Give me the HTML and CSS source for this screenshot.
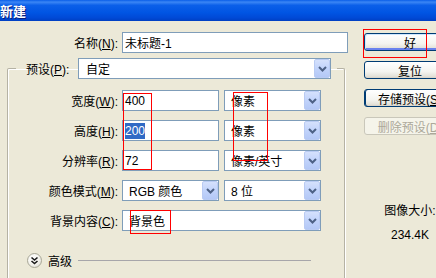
FILE: index.html
```html
<!DOCTYPE html>
<html lang="zh-CN">
<head>
  <meta charset="UTF-8" />
  <meta name="viewport" content="width=device-width, initial-scale=1" />
  <title>新建</title>
  <link rel="stylesheet" href="styles.css">
</head>
<body>
  <div class="window">
    <div class="titlebar">新建</div>
    <div class="content">
      <div class="main">
        <div class="row name-row">
          <span class="label">名称(<u>N</u>):</span>
          <div class="field name-field">未标题-1</div>
        </div>

        <fieldset class="group">
          <legend class="preset">
            <span class="preset-label">预设(<u>P</u>):</span>
            <div class="select preset-select">
              <span class="value">自定</span>
              <span class="arrow"><svg width="9" height="6" viewBox="0 0 9 6"><polyline points="1,1 4.5,4.5 8,1" /></svg></span>
            </div>
          </legend>

          <div class="row">
            <span class="label">宽度(<u>W</u>):</span>
            <div class="field short">400</div>
            <div class="select short">
              <span class="value">像素</span>
              <span class="arrow"><svg width="9" height="6" viewBox="0 0 9 6"><polyline points="1,1 4.5,4.5 8,1" /></svg></span>
            </div>
          </div>
          <div class="row">
            <span class="label">高度(<u>H</u>):</span>
            <div class="field short"><span class="selected">200</span></div>
            <div class="select short">
              <span class="value">像素</span>
              <span class="arrow"><svg width="9" height="6" viewBox="0 0 9 6"><polyline points="1,1 4.5,4.5 8,1" /></svg></span>
            </div>
          </div>
          <div class="row">
            <span class="label">分辨率(<u>R</u>):</span>
            <div class="field short">72</div>
            <div class="select short">
              <span class="value">像素/英寸</span>
              <span class="arrow"><svg width="9" height="6" viewBox="0 0 9 6"><polyline points="1,1 4.5,4.5 8,1" /></svg></span>
            </div>
          </div>
          <div class="row">
            <span class="label">颜色模式(<u>M</u>):</span>
            <div class="select short">
              <span class="value">RGB 颜色</span>
              <span class="arrow"><svg width="9" height="6" viewBox="0 0 9 6"><polyline points="1,1 4.5,4.5 8,1" /></svg></span>
            </div>
            <div class="select short">
              <span class="value">8 位</span>
              <span class="arrow"><svg width="9" height="6" viewBox="0 0 9 6"><polyline points="1,1 4.5,4.5 8,1" /></svg></span>
            </div>
          </div>
          <div class="row">
            <span class="label">背景内容(<u>C</u>):</span>
            <div class="select wide">
              <span class="value">背景色</span>
              <span class="arrow"><svg width="9" height="6" viewBox="0 0 9 6"><polyline points="1,1 4.5,4.5 8,1" /></svg></span>
            </div>
          </div>

          <div class="advanced">
            <span class="toggle">
              <svg width="15" height="15" viewBox="0 0 15 15">
                <polyline points="4.5,4.5 7.5,7 10.5,4.5" />
                <polyline points="4.5,8 7.5,10.5 10.5,8" />
              </svg>
            </span>
            <span class="advanced-label">高级</span>
            <span class="rule"></span>
          </div>
        </fieldset>
      </div>

      <div class="side">
        <button class="btn default">好</button>
        <button class="btn">复位</button>
        <button class="btn focused">存储预设(<u>S</u>)</button>
        <button class="btn" disabled>删除预设(<u>D</u>)</button>
        <div class="size-info">
          <div>图像大小:</div>
          <div class="size-value">234.4K</div>
        </div>
      </div>
    </div>
  </div>

  <!-- red annotation boxes -->
  <div class="mark mark-ok"></div>
  <div class="mark mark-values"></div>
  <div class="mark mark-units"></div>
  <div class="mark mark-bg"></div>
</body>
</html>
```

FILE: styles.css
```css
html {
  overflow: hidden;
}
body {
  margin: 0;
  width: 436px;
  height: 278px;
  overflow: hidden;
  background: #ECE9D8;
  font-family: "Liberation Sans", "Noto Sans CJK SC", sans-serif;
  font-size: 12px;
  color: #000;
}
.titlebar {
  height: 21px;
  line-height: 21px;
  color: #fff;
  font-weight: bold;
  font-size: 13px;
  font-family: "Noto Sans CJK SC", sans-serif;
  text-shadow: 1px 1px 0 #0A1E7A;
  background: linear-gradient(to bottom, #0A5EE8 0%, #3B86F5 10%, #0B5FE9 25%, #0055E3 60%, #0049D6 85%, #003FC2 100%);
  white-space: nowrap;
}
.content {
  display: flex;
  height: 257px;
  overflow: hidden;
}
.main {
  width: 364px;
  flex: none;
}
.row {
  display: flex;
  align-items: center;
  height: 21px;
  margin-top: 9px;
}
.name-row {
  margin-top: 11px;
  padding-left: 8px;
}
.label {
  width: 110px;
  margin-right: 4px;
  text-align: right;
  white-space: nowrap;
}
.field, .select {
  box-sizing: border-box;
  height: 21px;
  border: 1px solid #7F9DB9;
  background: #fff;
  display: flex;
  align-items: center;
  white-space: nowrap;
}
.field {
  padding-left: 2px;
}
.name-field {
  width: 226px;
}
.short {
  width: 97px;
}
.short + .short {
  margin-left: 5px;
}
.wide {
  width: 199px;
}
.select .value {
  flex: 1;
  padding-left: 6px;
}
.selected {
  background: #316AC5;
  color: #fff;
  line-height: 16px;
}
.arrow {
  box-sizing: border-box;
  width: 16px;
  height: 19px;
  display: flex;
  align-items: center;
  justify-content: center;
  border: 1px solid #B9CBF3;
  border-radius: 2px;
  background: linear-gradient(to bottom, #D5E1FC 0%, #C1D3FB 50%, #B4C8F6 100%);
}
.arrow polyline {
  fill: none;
  stroke: #4D6185;
  stroke-width: 2;
}

/* group box with the preset combo as its legend; it runs on below the window edge */
.group {
  box-sizing: border-box;
  width: 338px;
  min-width: 0;
  height: 220px;
  margin: 5px 0 0 7px;
  padding: 0;
  border: 1px solid #B5B2A4;
  border-bottom: 0;
  border-radius: 2px 2px 0 0;
  box-shadow: inset 1px 1px 0 #fff, 1px 1px 0 #fff;
}
.preset {
  display: flex;
  align-items: center;
  margin-left: 8px;
  padding: 0 6px 0 10px;
}
.preset-label {
  width: 47px;
  margin-right: 5px;
  white-space: nowrap;
}
.preset-select {
  width: 253px;
}
.preset-select .value {
  padding-left: 7px;
}
.group > .row:first-of-type {
  margin-top: 11px;
}
.advanced {
  display: flex;
  align-items: center;
  margin: 22px 33px 0 19px;
  height: 15px;
}
.toggle {
  width: 15px;
  height: 15px;
  border-radius: 50%;
  box-sizing: border-box;
  border: 1px solid #A8A797;
  background: radial-gradient(circle at 40% 35%, #fff 0%, #F4F3EE 50%, #D8D6CC 100%);
  display: flex;
}
.toggle svg {
  margin: -1px;
}
.toggle polyline {
  fill: none;
  stroke: #1A1A1A;
  stroke-width: 1.6;
}
.advanced-label {
  margin: 0 6px;
}
.rule {
  flex: 1;
  border-top: 1px solid #A7A6AA;
}

/* right column, cut by the window edge as in the screenshot */
.side {
  display: flex;
  flex-direction: column;
  padding-top: 12px;
  width: 92px;
  flex: none;
}
.btn {
  box-sizing: border-box;
  width: 92px;
  height: 18px;
  margin-bottom: 10px;
  padding: 0;
  font: inherit;
  color: #000;
  border: 1px solid #003C74;
  border-radius: 3px;
  background: linear-gradient(to bottom, #FFFFFF 0%, #F4F4F0 60%, #E3E1D8 90%, #D6D0C5 100%);
  white-space: nowrap;
}
.btn.default {
  box-shadow: inset 1px 1px 0 #CEE7FF, inset -1px -2px 0 #6982EE;
}
.btn.focused {
  box-shadow: inset 1px 0 0 #003C74;
}
.btn:disabled {
  color: #ACA899;
  border-color: #C9C7BA;
  background: #F5F4EA;
}
.size-info {
  margin-top: 58px;
  text-align: center;
  line-height: 16px;
  white-space: nowrap;
}
.size-value {
  margin-top: 8px;
}

/* annotation overlays */
.mark {
  position: absolute;
  box-sizing: border-box;
  border: 1px solid #F00;
}
.mark-ok {
  left: 363px;
  top: 29px;
  width: 64px;
  height: 29px;
}
.mark-values {
  left: 123px;
  top: 93px;
  width: 29px;
  height: 77px;
}
.mark-units {
  left: 233px;
  top: 92px;
  width: 35px;
  height: 69px;
}
.mark-bg {
  left: 130px;
  top: 210px;
  width: 41px;
  height: 24px;
}
```
